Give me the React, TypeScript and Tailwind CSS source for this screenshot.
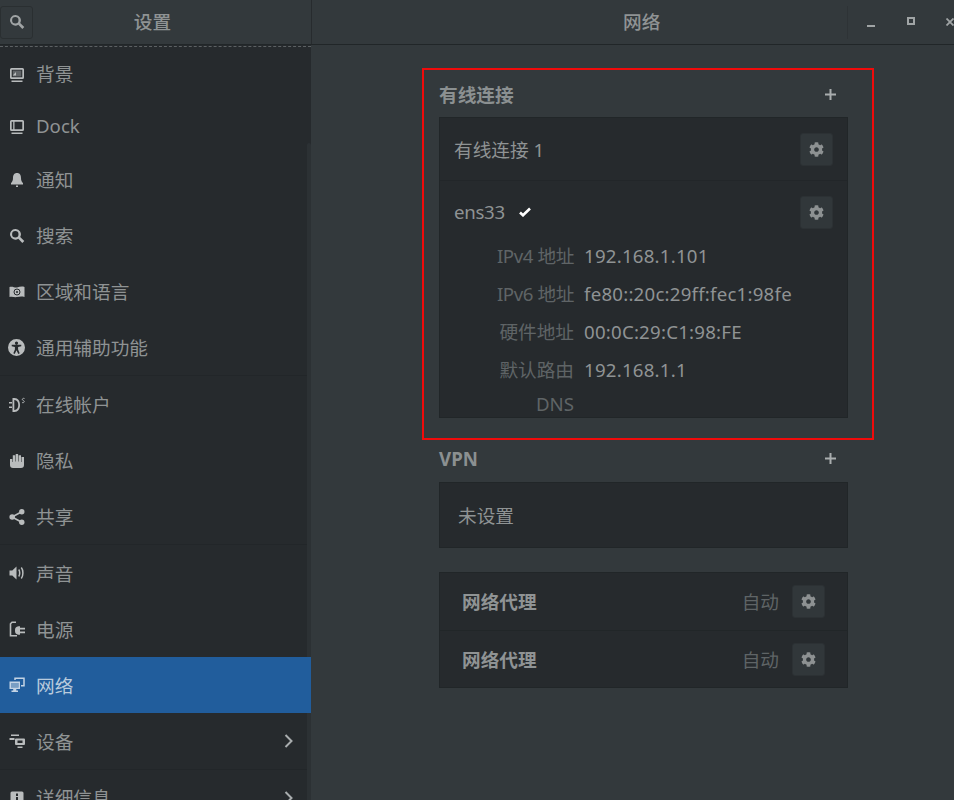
import type { ReactNode } from 'react'
import { FaCog } from 'react-icons/fa'

const Ic = ({ children }: { children: ReactNode }) => (
  <svg viewBox="0 0 16 16" width="16" height="16" className="shrink-0" fill="currentColor">
    {children}
  </svg>
)

const SearchIcon = () => (
  <Ic>
    <path d="M6.300 1a5.300 5.300 0 1 0 3 9.700l4 4.300 2-1.900-4.100-4.200A5.300 5.300 0 0 0 6.300 1Zm0 2.100a3.200 3.200 0 1 1 0 6.400 3.200 3.200 0 0 1 0-6.400Z" fillRule="evenodd" />
  </Ic>
)

const icons: Record<string, ReactNode> = {
  bg: (
    <Ic>
      <path fillRule="evenodd" d="M2.500 1h11A1.500 1.500 0 0 1 15 2.500v8a1.500 1.500 0 0 1-1.500 1.500h-11A1.500 1.500 0 0 1 1 10.500v-8A1.500 1.500 0 0 1 2.500 1Zm.2 1.700v7.600h10.600V2.700Z" />
      <path d="M3.700 3.500h8.600v6H3.700z" opacity=".4" />
      <path d="M3.700 8.500 7 5v3.500ZM2.500 13.500h11V15h-11z" />
    </Ic>
  ),
  dock: (
    <Ic>
      <path fillRule="evenodd" d="M2.500 1h11A1.500 1.500 0 0 1 15 2.500v8a1.500 1.500 0 0 1-1.500 1.500h-11A1.500 1.500 0 0 1 1 10.500v-8A1.500 1.500 0 0 1 2.500 1Zm3 1.700v7.600h7.800V2.700Zm-2.800 0v7.600h1.500V2.700Z" />
      <path d="M2.500 13.500h11V15h-11z" />
    </Ic>
  ),
  bell: (
    <Ic>
      <path d="M8 1C5 1 4 3.300 4 6c0 2.600-.8 4-2 5v1.500h12V11c-1.200-1-2-2.400-2-5 0-2.700-1-5-4-5ZM7 13.500h2V15H7z" />
    </Ic>
  ),
  search: <SearchIcon />,
  region: (
    <Ic>
      <path d="M.5 3c3-1 5 .8 7.500.4S12.500 2 15.500 3v10c-3-.8-5-.4-7.500.1S3.500 12.200.5 13Z" />
      <circle cx="8" cy="8" r="3" fill="none" stroke="#262a2d" strokeWidth="1" />
      <circle cx="8" cy="8" r="1" fill="#262a2d" />
    </Ic>
  ),
  access: (
    <svg viewBox="0 0 16 16" width="17" height="17" className="shrink-0" fill="currentColor">
      <path
        fillRule="evenodd"
        d="M8 0a8 8 0 1 1 0 16A8 8 0 0 1 8 0Zm0 2.300a1.500 1.500 0 1 0 0 3 1.500 1.500 0 0 0 0-3ZM3.500 5.500v1.300l3 .8v2.200L5 13.500l1.300.5L8 10.500l1.700 3.500 1.300-.5-1.500-3.700V7.600l3-.8V5.500Z"
      />
    </svg>
  ),
  online: (
    <Ic>
      <path d="M0 5h3v1.500H0zM0 9.500h3v1.500H0z" />
      <path fillRule="evenodd" d="M3.500 1h2C9 1 11 4.200 11 8s-2 7-5.500 7h-2Zm1.800 2v10h.3C8 13 9.300 10.800 9.300 8S8 3 5.600 3Z" />
      <path d="M15.500 1.500c-1-.5-2.200 0-2.200 1s2 1 2 2-1.200 1.500-2.300 1" fill="none" stroke="currentColor" strokeWidth=".9" />
    </Ic>
  ),
  hand: (
    <Ic>
      <path d="M1 6h2.300v3h.5V2.200h2.400V8.500h.5V1h2.400v7.500h.5V2.200H12v6.800h.5V4h2.500v8a3 3 0 0 1-3 3H4a3 3 0 0 1-3-3Z" />
    </Ic>
  ),
  share: (
    <Ic>
      <circle cx="3.200" cy="8" r="2.800" />
      <circle cx="12.800" cy="2.800" r="2.700" />
      <circle cx="12.800" cy="13.200" r="2.700" />
      <path d="M3 8l9.800-5.200M3 8l9.800 5.200" stroke="currentColor" strokeWidth="1.600" />
    </Ic>
  ),
  sound: (
    <Ic>
      <path d="M.5 5.500h2.800L7.500 1.500v13l-4.200-4H.5Z" />
      <path d="M9.700 4.500c.8.900 1 2.300 1 3.500s-.2 2.600-1 3.500" fill="none" stroke="currentColor" strokeWidth="1.500" />
      <path d="M12.300 2.500c1.200 1.500 1.600 3.500 1.600 5.500s-.4 4-1.600 5.500" fill="none" stroke="currentColor" strokeWidth="1.500" />
    </Ic>
  ),
  power: (
    <Ic>
      <path d="M7 1.300H3L1.500 2.800v11.900H8" fill="none" stroke="currentColor" strokeWidth="1.600" />
      <path d="M6 9.500A4 4 0 0 1 9.500 5.300h1.500v1.500H16v1.700h-5v2h5v1.700h-5v1.500H9.500A4 4 0 0 1 6 9.500Z" />
    </Ic>
  ),
  network: (
    <Ic>
      <path fillRule="evenodd" d="M.5 4.500H11v7.500H7.300v1.500h1.700V15H2.500v-1.500h1.700V12H.5Zm1.500 1.500v4.500h7.500V6Z" />
      <path d="M2 6h7.500v4.500H2Z" opacity=".55" />
      <path d="M6 3V1.300h9V8.700h-3" fill="none" stroke="currentColor" strokeWidth="1.500" />
    </Ic>
  ),
  devices: (
    <Ic>
      <path d="M2 1.500h8V3H2zM0.500 5h5V7h-5z" />
      <path fillRule="evenodd" d="M7 5.500h8a1 1 0 0 1 1 1V11a1 1 0 0 1-1 1H7a1 1 0 0 1-1-1V6.500a1 1 0 0 1 1-1Zm1.500 2v2.500h5V7.500Z" />
      <path d="M8.500 13.500h5V15h-5z" />
    </Ic>
  ),
  info: (
    <Ic>
      <path fillRule="evenodd" d="M3 1.500h10A1.500 1.500 0 0 1 14.500 3v10a1.500 1.500 0 0 1-1.500 1.500H3A1.500 1.500 0 0 1 1.500 13V3A1.500 1.500 0 0 1 3 1.500ZM7 3.500V6h2V3.500Zm0 3.500v5.500h2V7Z" />
    </Ic>
  ),
}

const navItems = [
  { id: 'bg', label: '背景', height: 'h-[55px]' },
  { id: 'dock', label: 'Dock', height: 'h-[50px]', shift: 'pb-[2px]' },
  { id: 'bell', label: '通知', height: 'h-14' },
  { id: 'search', label: '搜索', height: 'h-14' },
  { id: 'region', label: '区域和语言', height: 'h-14' },
  { id: 'access', label: '通用辅助功能', height: 'h-14', line: true, shift: 'pt-[2px]' },
  { id: 'online', label: '在线帐户', height: 'h-[57px]', shift: 'pt-[2px]' },
  { id: 'hand', label: '隐私', height: 'h-14' },
  { id: 'share', label: '共享', height: 'h-14', line: true, shift: 'pt-[2px]' },
  { id: 'sound', label: '声音', height: 'h-14', shift: 'pt-[2px]' },
  { id: 'power', label: '电源', height: 'h-14', shift: 'pt-[2px]' },
  { id: 'network', label: '网络', height: 'h-14', active: true, shift: 'pt-[2px]' },
  { id: 'devices', label: '设备', height: 'h-[57px]', arrow: true, line: true, shift: 'pt-[2px]' },
  { id: 'info', label: '详细信息', height: 'h-14', arrow: true },
]

const details = [
  { label: 'IPv4 地址', value: '192.168.1.101', cls: 'h-[38px] tracking-[-0.4px]' },
  { label: 'IPv6 地址', value: 'fe80::20c:29ff:fec1:98fe', cls: 'h-[38px] tracking-[-0.4px]' },
  { label: '硬件地址', value: '00:0C:29:C1:98:FE', cls: 'h-[38px]' },
  { label: '默认路由', value: '192.168.1.1', cls: 'h-[38px]' },
  { label: 'DNS', value: '', cls: 'h-7 pt-[2px]' },
]

function GearButton() {
  return (
    <button className="flex h-[33px] w-[33px] shrink-0 items-center justify-center rounded-[3px] border border-[#2c3134] bg-[#31373a] text-[#8d9192]">
      <FaCog size={15} />
    </button>
  )
}

function SectionHeader({ title }: { title: string }) {
  return (
    <div className="flex h-[26px] items-center justify-between pr-[12px] font-bold text-[#8b9091]">
      <span>{title}</span>
      <svg viewBox="0 0 11 11" width="11" height="11" fill="#a9adae" className="-mt-[2px]">
        <path d="M4.500 0h2v4.500H11v2H6.500V11h-2V6.500H0v-2h4.500z" />
      </svg>
    </div>
  )
}

export default function App() {
  return (
    <div className="relative flex h-[800px] w-[954px] flex-col overflow-hidden bg-[#33393c] font-['Noto_Sans','Noto_Sans_CJK_SC',sans-serif] text-[18.67px] leading-none text-[#8f9394]">
      <header className="flex h-[45px] shrink-0 border-b border-[#212628]">
        <div className="flex w-[312px] shrink-0 items-center border-r border-[#272b2e]">
          <button className="flex h-[33px] w-[33px] items-center justify-center rounded-[3px] border border-[#2a2f31] text-[#a0a4a5]">
            <SearchIcon />
          </button>
          <span className="flex-1 pr-[39px] text-center font-medium text-[#8f9394]">设置</span>
        </div>
        <div className="flex min-w-0 flex-1 items-center overflow-hidden">
          <span className="ml-[311px] shrink-0 whitespace-nowrap font-medium text-[#8f9394]">网络</span>
          <div className="ml-[187px] h-[33px] w-px shrink-0 bg-[#2e3336]" />
          <svg viewBox="0 0 8 8" width="8" height="8" fill="#a0a4a5" className="ml-[19px] mt-[2px] shrink-0">
            <path d="M0 6h8v2H0z" />
          </svg>
          <svg viewBox="0 0 8 8" width="8" height="8" fill="#a0a4a5" className="ml-[32px] -mt-[2px] shrink-0">
            <path fillRule="evenodd" d="M0 0h8v8H0Zm2 2v4h4V2Z" />
          </svg>
          <svg viewBox="0 0 8 8" width="8" height="8" className="ml-[31px] shrink-0" stroke="#a0a4a5" strokeWidth="1.800">
            <path d="M.500.500l7 7M7.500.500l-7 7" />
          </svg>
        </div>
      </header>

      <div className="flex min-h-0 flex-1">
        <aside className="relative w-[311px] shrink-0 overflow-hidden bg-[#262a2d]">
          <div className="mt-px border-t border-dashed border-[#5c6163]" />
          {navItems.map((item) => (
            <div
              key={item.id}
              className={`relative flex items-center ${item.height} ${item.line ? 'border-b border-[#222629]' : ''} ${item.active ? 'z-10 bg-[#215d9c] text-[#b9cbdd]' : ''}`}
            >
              <span className={`mr-[3px] flex w-[33px] shrink-0 justify-center ${item.active ? 'text-[#c3d3e4]' : 'text-[#b9bcbd]'}`}>
                {icons[item.id]}
              </span>
              <span className={item.shift ?? ''}>{item.label}</span>
              {item.arrow && (
                <svg viewBox="0 0 9 14" width="9" height="14" className="absolute left-[284px]" fill="none" stroke="#a9adae" strokeWidth="2">
                  <path d="M1.500 1l6 6-6 6" />
                </svg>
              )}
            </div>
          ))}
          <div className="absolute left-[307px] top-[98px] h-[700px] w-[4px] rounded-t-[2px] bg-[#2c3134]" />
        </aside>

        <main className="flex-1 pl-[128px]">
          <div className="w-[409px] pt-[37px]">
            <SectionHeader title="有线连接" />
            <div className="mt-[9px] h-[301px] border border-[#212628] bg-[#262a2d]">
              <div className="flex h-[63px] items-center justify-between border-b border-[#222629] pl-[14px] pr-[14px]">
                <span className="pt-[2px]">有线连接 1</span>
                <GearButton />
              </div>
              <div className="flex items-center justify-between pl-[14px] pr-[14px] pt-[15px]">
                <div className="flex items-center gap-[14px]">
                  <span className="tracking-[-0.3px]">ens33</span>
                  <svg viewBox="0 0 12 10" width="12" height="10" fill="none" stroke="#ffffff" strokeWidth="2.600">
                    <path d="M1 5.500l3 2.800L11 1.500" />
                  </svg>
                </div>
                <GearButton />
              </div>
              <div className="mt-[8px] flex flex-col">
                {details.map((row) => (
                  <div key={row.label} className={`flex items-center ${row.cls}`}>
                    <span className="w-[134px] text-right text-[#5f6466]">{row.label}</span>
                    <span className="ml-[10px] whitespace-nowrap tracking-[0.22px]">{row.value}</span>
                  </div>
                ))}
              </div>
            </div>

            <div className="mt-[28px]">
              <SectionHeader title="VPN" />
            </div>
            <div className="mt-[10px] flex h-[66px] items-center border border-[#212628] bg-[#262a2d] pl-[18px]">
              <span className="pt-[2px]">未设置</span>
            </div>

            <div className="mt-[24px] flex h-[116px] flex-col border border-[#212628] bg-[#262a2d]">
              {[0, 1].map((i) => (
                <div
                  key={i}
                  className={`flex items-center pl-[22px] pr-[22px] ${i === 0 ? 'h-[58px] border-b border-[#212628]' : 'h-14'}`}
                >
                  <span className="flex-1 pt-[2px] font-bold">网络代理</span>
                  <span className="mr-[13px] pt-[2px] text-[#5f6466]">自动</span>
                  <GearButton />
                </div>
              ))}
            </div>
          </div>
        </main>
      </div>

      <div className="absolute left-[422px] top-[68px] h-[372px] w-[452px] border-2 border-[#f00b0b]" />
    </div>
  )
}
